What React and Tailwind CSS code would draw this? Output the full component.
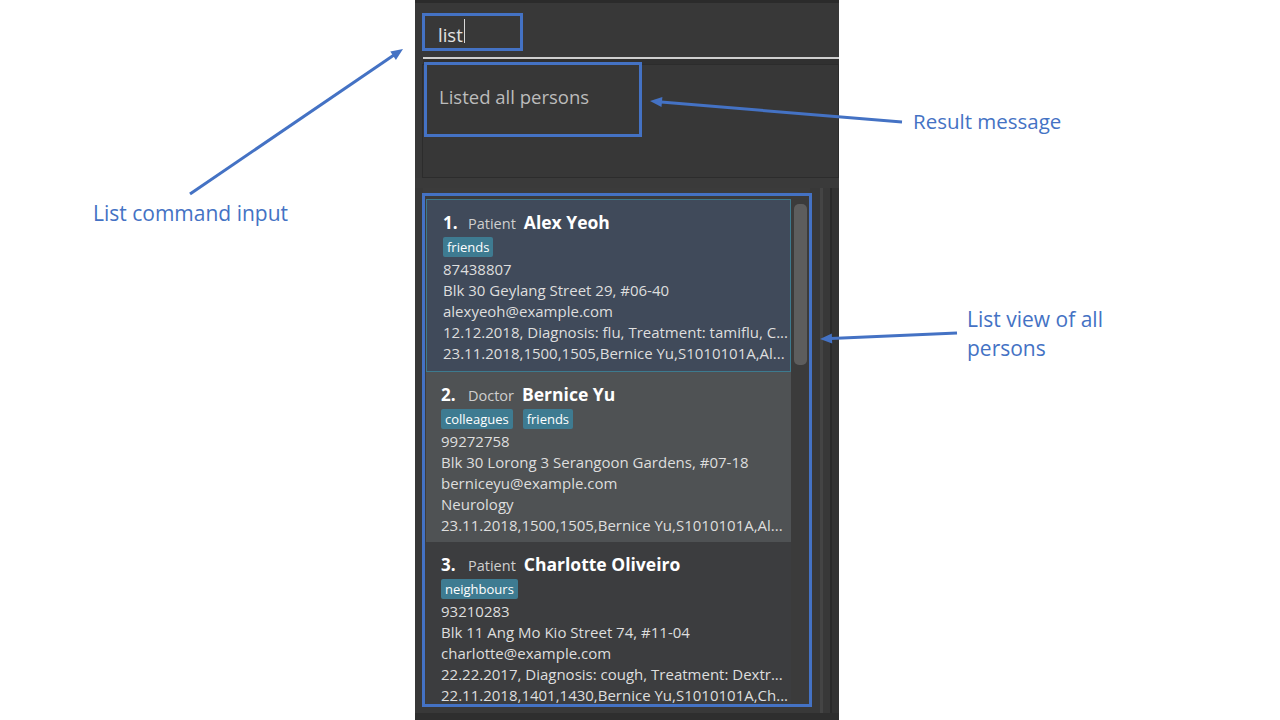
import React from "react";

const persons = [
  {
    n: "1.",
    role: "Patient",
    name: "Alex Yeoh",
    tags: ["friends"],
    lines: [
      "87438807",
      "Blk 30 Geylang Street 29, #06-40",
      "alexyeoh@example.com",
      "12.12.2018, Diagnosis: flu, Treatment: tamiflu, C...",
      "23.11.2018,1500,1505,Bernice Yu,S1010101A,Al...",
    ],
    selected: true,
  },
  {
    n: "2.",
    role: "Doctor",
    name: "Bernice Yu",
    tags: ["colleagues", "friends"],
    lines: [
      "99272758",
      "Blk 30 Lorong 3 Serangoon Gardens, #07-18",
      "berniceyu@example.com",
      "Neurology",
      "23.11.2018,1500,1505,Bernice Yu,S1010101A,Al...",
    ],
    alt: true,
  },
  {
    n: "3.",
    role: "Patient",
    name: "Charlotte Oliveiro",
    tags: ["neighbours"],
    lines: [
      "93210283",
      "Blk 11 Ang Mo Kio Street 74, #11-04",
      "charlotte@example.com",
      "22.22.2017, Diagnosis: cough, Treatment: Dextr...",
      "22.11.2018,1401,1430,Bernice Yu,S1010101A,Ch...",
    ],
  },
];

function Card({ p }) {
  const base = p.selected
    ? "border border-[#3d7a8e] bg-[#404a5a] pl-[16px] pt-[11px] pb-[7px]"
    : p.alt
    ? "bg-[#4f5254] pl-[15px] pt-[11px] pb-[6px]"
    : "bg-[#3c3d3f] pl-[15px] pt-[11px] pb-[6px]";
  return (
    <div className={`${base} pr-[4px] shrink-0`}>
      <div className="flex items-baseline h-[22px] leading-[22px] whitespace-nowrap">
        <span className={`${p.selected ? "w-[25px]" : "w-[27px]"} text-[17px] font-bold text-white`}>{p.n}</span>
        <span className="text-[14.5px] text-[#cfcfcf]">{p.role}</span>
        <span className="ml-[8px] text-[17.5px] font-bold text-white">{p.name}</span>
      </div>
      <div className="flex gap-[10px] mt-[4px] h-[20px]">
        {p.tags.map((t) => (
          <span
            key={t}
            className="h-[20px] leading-[20px] px-[4px] rounded-[2px] bg-[#3e7b91] text-white text-[13px]"
          >
            {t}
          </span>
        ))}
      </div>
      <div className="mt-[2px]">
        {p.lines.map((l, i) => (
          <div key={i} className="h-[21px] leading-[21px] text-[15px] text-[#dedede] whitespace-nowrap">
            {l}
          </div>
        ))}
      </div>
    </div>
  );
}

export default function App() {
  return (
    <div
      className="relative w-[1280px] h-[720px] bg-white overflow-hidden"
      style={{ fontFamily: '"Open Sans", "Noto Sans", sans-serif' }}
    >
      <div className="ml-[415px] w-[424px] h-[720px] bg-[#383838] flex flex-col">
        <div className="h-[3px] bg-[#2b2b2b]" />
        <div className="h-[54px] pl-[23px] pt-[20px] flex items-start">
          <span className="text-[18.5px] leading-[24px] text-[#e2e2e2]">list</span>
          <span className="mt-[-4px] ml-[1px] w-[1px] h-[24px] bg-[#d8d8d8]" />
        </div>
        <div className="ml-[8px] h-[2px] bg-[#cfcfcf]" />
        <div className="ml-[8px] h-[5px] bg-[#303030]" />
        <div className="ml-[7px] h-[114px] border border-[#2c2c2c] bg-[#373737] pl-[16px] pt-[19px]">
          <div className="text-[18.5px] leading-[26px] text-[#bcbcbc]">Listed all persons</div>
        </div>
        <div className="h-[10px] bg-[#3a3a3a]" />
        <div className="flex h-[525px]">
          <div className="w-[8px]" />
          <div className="w-[387px] h-[516px] bg-[#3b3b3b] flex pt-[11px] pl-[3px] overflow-hidden">
            <div className="w-[365px] flex flex-col">
              {persons.map((p) => (
                <Card key={p.n} p={p} />
              ))}
            </div>
            <div className="ml-[3px] w-[13px] pt-[5px]">
              <div className="h-[161px] rounded-[5px] bg-[#5d5d5d]" />
            </div>
          </div>
          <div className="w-[10px]" />
          <div className="w-[3px] bg-[#444444]" />
          <div className="w-[7px]" />
          <div className="w-[2px] bg-[#2a2a2a]" />
          <div className="w-[7px] bg-[#333333]" />
        </div>
        <div className="h-[7px] bg-[#2e2e2e]" />
      </div>

      {/* annotation boxes */}
      <div className="absolute left-[422px] top-[13px] w-[101px] h-[38px] border-[3px] border-[#4472c4]" />
      <div className="absolute left-[424px] top-[62px] w-[218px] h-[75px] border-[3px] border-[#4472c4]" />
      <div className="absolute left-[422px] top-[193px] w-[390px] h-[514px] border-[3px] border-[#4472c4]" />

      {/* arrows */}
      <svg className="absolute inset-0 pointer-events-none" width="1280" height="720">
        <line x1="190" y1="194" x2="394" y2="55" stroke="#4472c4" strokeWidth="3" />
        <polygon points="403,49 395.9,59.9 390.3,51.6" fill="#4472c4" />
        <line x1="902" y1="122" x2="661" y2="102" stroke="#4472c4" strokeWidth="3" />
        <polygon points="650,101 662.4,97 661.5,107" fill="#4472c4" />
        <line x1="957" y1="333" x2="831" y2="338.5" stroke="#4472c4" strokeWidth="3" />
        <polygon points="820,339 832.2,343.5 831.8,333.5" fill="#4472c4" />
      </svg>

      {/* labels */}
      <div className="absolute left-[93px] top-[200px] text-[21px] leading-[27px] text-[#4472c4] whitespace-nowrap">
        List command input
      </div>
      <div className="absolute left-[913px] top-[108px] text-[20.5px] leading-[27px] text-[#4472c4] whitespace-nowrap">
        Result message
      </div>
      <div className="absolute left-[967px] top-[305px] text-[21px] leading-[29px] text-[#4472c4] whitespace-nowrap">
        <div>List view of all</div>
        <div>persons</div>
      </div>
    </div>
  );
}
